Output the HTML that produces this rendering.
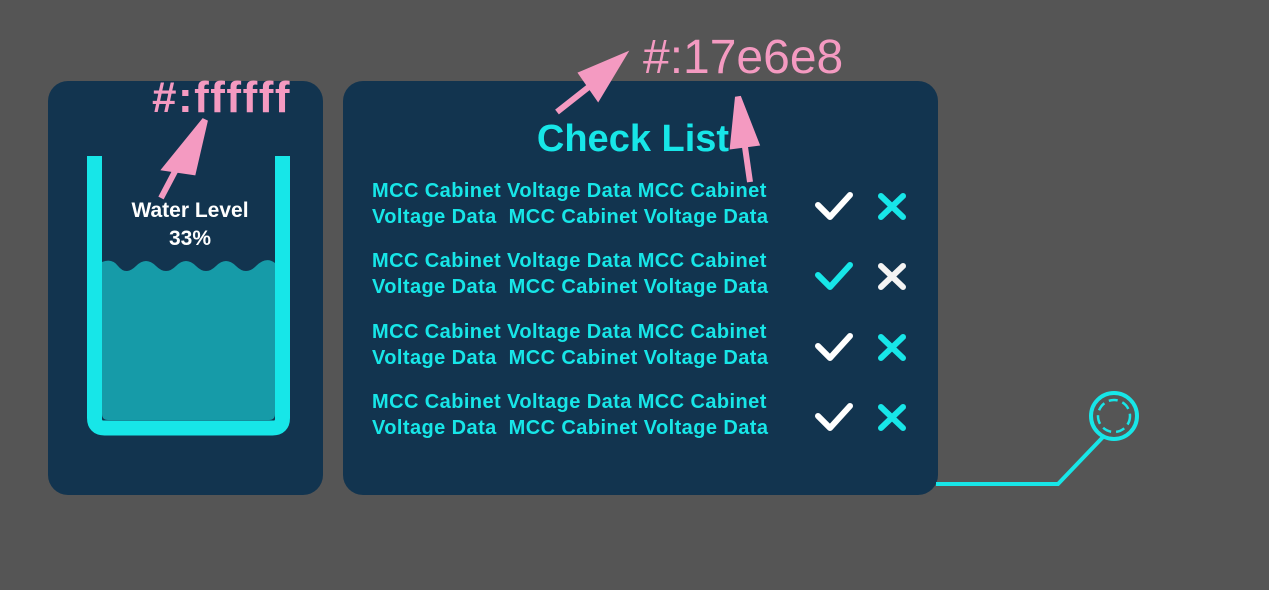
<!DOCTYPE html>
<html><head><style>
body{margin:0;width:1269px;height:590px;background:#555555;position:relative;overflow:hidden;font-family:"Liberation Sans",sans-serif}
.p{position:absolute;background:#12344f;border-radius:20px}
.t{position:absolute;color:#17e6e8;font-size:20px;font-weight:bold;line-height:26px;left:372px;white-space:nowrap;letter-spacing:0.42px}
.pink{position:absolute;color:#f49ac1;font-weight:bold;font-size:44px;line-height:1}
</style></head><body>
<div class="p" style="left:48px;top:81px;width:275px;height:414px"></div>
<div class="p" style="left:343px;top:81px;width:595px;height:414px"></div>
<svg width="1269" height="590" style="position:absolute;left:0;top:0">
<path d="M102 262 Q112 258 118 266 Q126 276 136 266 Q146 256 156 266 Q166 276 176 266 Q186 256 196 266 Q206 276 216 266 Q226 256 236 266 Q246 276 256 266 Q266 256 275 263 L275 414 Q275 420 269 420 L108 420 Q102 420 102 414Z" fill="#169ba8"/>
<path d="M94.5 156 L94.5 418 Q94.5 428 104.5 428 L272.5 428 Q282.5 428 282.5 418 L282.5 156" fill="none" stroke="#17e6e8" stroke-width="15"/>
<text x="190" y="217" fill="#fff" font-size="21" font-weight="bold" text-anchor="middle" font-family="Liberation Sans">Water Level</text>
<text x="190" y="245" fill="#fff" font-size="21" font-weight="bold" text-anchor="middle" font-family="Liberation Sans">33%</text>
<path d="M161 198 L181 160 M166 168 L205 120 L193 172Z" stroke="#f49ac1" stroke-width="6" fill="#f49ac1"/>
<path d="M557 112 L590 86 M582 74 L622 57 L598 97Z" stroke="#f49ac1" stroke-width="6" fill="#f49ac1"/>
<path d="M750 182 L744 140 M733 146 L738 97 L756 143Z" stroke="#f49ac1" stroke-width="6" fill="#f49ac1"/>
<text x="633" y="151" fill="#17e6e8" font-size="38" font-weight="bold" text-anchor="middle" font-family="Liberation Sans">Check List</text>
<g stroke-width="6" stroke-linecap="round" stroke-linejoin="round" fill="none">
<path d="M818 205 L830 217 L850 195" stroke="#fff"/><path d="M881 196 L903 217 M903 196 L881 217" stroke="#17e6e8"/>
<path d="M818 275 L830 287 L850 265" stroke="#17e6e8"/><path d="M881 266 L903 287 M903 266 L881 287" stroke="#f4f4f4"/>
<path d="M818 346 L830 358 L850 336" stroke="#fff"/><path d="M881 337 L903 358 M903 337 L881 358" stroke="#17e6e8"/>
<path d="M818 416 L830 428 L850 406" stroke="#fff"/><path d="M881 407 L903 428 M903 407 L881 428" stroke="#17e6e8"/>
</g>
<path d="M936 484 L1058 484 L1103 437" fill="none" stroke="#17e6e8" stroke-width="4"/>
<circle cx="1114" cy="416" r="23" fill="none" stroke="#17e6e8" stroke-width="4"/>
<circle cx="1114" cy="416" r="16" fill="none" stroke="#17e6e8" stroke-width="2.5" stroke-dasharray="9 5"/>
</svg>
<div class="pink" style="left:152px;top:76px;letter-spacing:1.5px">#:ffffff</div>
<div class="pink" style="left:643px;top:34px;font-weight:normal;font-size:48px">#:17e6e8</div>
<div class="t" style="top:178px">MCC Cabinet Voltage Data MCC Cabinet<br>Voltage Data&nbsp; MCC Cabinet Voltage Data</div>
<div class="t" style="top:248px">MCC Cabinet Voltage Data MCC Cabinet<br>Voltage Data&nbsp; MCC Cabinet Voltage Data</div>
<div class="t" style="top:319px">MCC Cabinet Voltage Data MCC Cabinet<br>Voltage Data&nbsp; MCC Cabinet Voltage Data</div>
<div class="t" style="top:389px">MCC Cabinet Voltage Data MCC Cabinet<br>Voltage Data&nbsp; MCC Cabinet Voltage Data</div>
</body></html>
